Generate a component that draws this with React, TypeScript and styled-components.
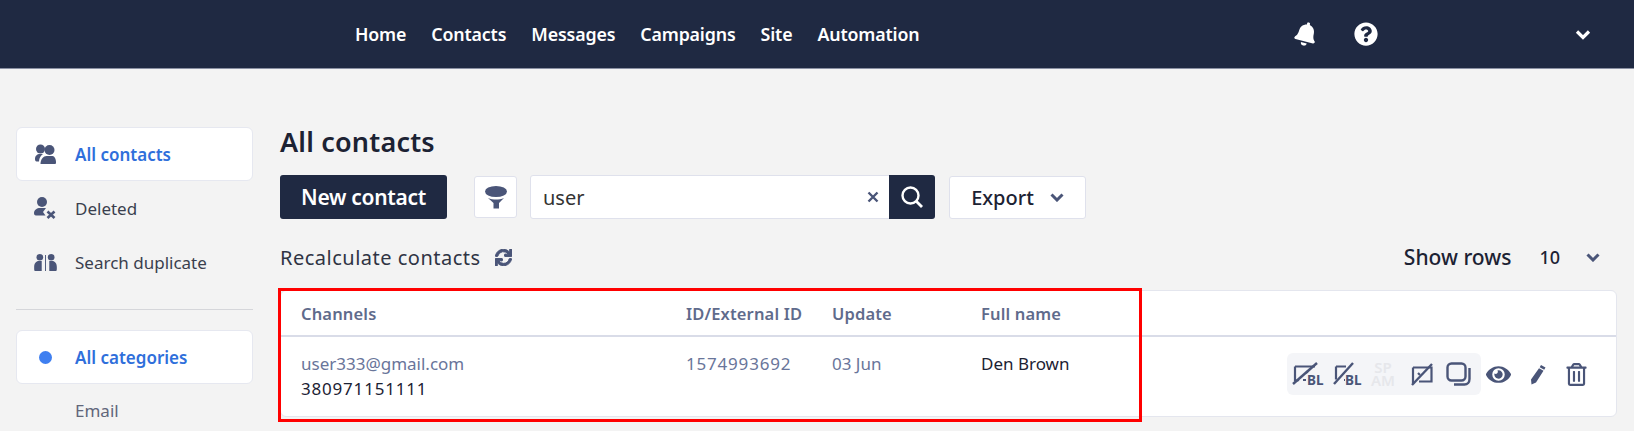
import React from "react";
import styled, { createGlobalStyle } from "styled-components";
import { FaBell, FaQuestionCircle, FaSync, FaEye, FaRegTrashAlt } from "react-icons/fa";

const Global = createGlobalStyle`
  html, body { margin: 0; padding: 0; background: #f3f3f3; }
  body { font-family: "Noto Sans", "Liberation Sans", sans-serif; color: #1f2942; overflow: hidden; }
  * { box-sizing: border-box; }
`;
const I = "#4a5578";
const Page = styled.div`width: 1634px; height: 431px; overflow: hidden; position: relative;`;
const Header = styled.header`
  height: 69px; background: #1f2942; display: flex; align-items: center;
  border-bottom: 1px solid #8a90a3; padding: 0 0 0 355px; color: #fff;
`;
const Nav = styled.nav`display: flex; gap: 25px; width: 940px; flex: none;`;
const NavLink = styled.a`font-size: 17.8px; font-weight: 600; color: #fff; line-height: 22px; letter-spacing: -0.15px;`;
const HeaderIcons = styled.div`display: flex; align-items: center; flex: none; color: #fff;`;
const Bell = styled(FaBell)`width: 22px; height: 24px; flex: none; transform: rotate(14deg);`;
const Help = styled(FaQuestionCircle)`width: 24px; height: 24px; flex: none; margin-left: 37px;`;
const Chevron = styled.svg<{ $left?: number }>`display: block; flex: none; margin-left: ${p => p.$left ?? 0}px;`;
const Body = styled.div`display: flex; padding: 58px 18px 0 16px; gap: 26px;`;
const Side = styled.aside`width: 237px; flex: none;`;
const SideItem = styled.div<{ $active?: boolean }>`
  height: 54px; display: flex; align-items: center; padding-left: 16px; gap: 18px; font-size: 17px;
  border-radius: 6px; color: ${p => (p.$active ? "#2f6fdb" : "#3a3f4e")}; font-weight: ${p => (p.$active ? 600 : 400)};
  background: ${p => (p.$active ? "#fff" : "transparent")};
  border: 1px solid ${p => (p.$active ? "#e6e8f0" : "transparent")};
`;
const IconSlot = styled.span`width: 24px; display: flex; justify-content: center; flex: none;`;
const Dot = styled.span`width: 13px; height: 13px; border-radius: 50%; background: #3f7ff0;`;
const Divider = styled.hr`margin: 20px 0 20px; border: 0; border-top: 1px solid #d5d6da;`;
const Sub = styled.div`padding: 15px 0 0 59px; font-size: 17px; line-height: 23px; color: #61667a;`;
const Main = styled.main`flex: 1; min-width: 0; padding-left: 1px;`;
const Title = styled.h1`margin: 0; font-size: 27px; line-height: 30px; font-weight: 600; color: #1c2233; letter-spacing: 0.2px;`;
const Toolbar = styled.div`display: flex; align-items: center; margin-top: 18px; height: 44px;`;
const Primary = styled.button`
  width: 167px; height: 44px; background: #1f2942; color: #fff; border: 0; border-radius: 3px;
  font: 600 21px "Noto Sans", sans-serif; letter-spacing: -0.3px; padding: 0;
`;
const Square = styled.div`
  margin-left: 27px; width: 43px; height: 42px; background: #fff; border: 1px solid #dfe1ec; border-radius: 3px;
  display: flex; align-items: center; justify-content: center;
`;
const Search = styled.div`
  margin-left: 13px; width: 405px; height: 44px; background: #fff; border: 1px solid #dfe1ec; border-radius: 3px;
  display: flex; align-items: center; padding-left: 12px; font-size: 20px; color: #333;
`;
const SearchText = styled.span`flex: 1;`;
const Clear = styled.svg`margin-right: 10px;`;
const SearchBtn = styled.div`
  width: 46px; height: 44px; margin: -1px -1px -1px 0; background: #1f2942; border-radius: 0 3px 3px 0;
  display: flex; align-items: center; justify-content: center;
`;
const Export = styled.div`
  margin-left: 14px; width: 137px; height: 43px; background: #fff; border: 1px solid #dfe1ec; border-radius: 3px;
  display: flex; align-items: center; justify-content: center; gap: 16px; font-size: 20px; color: #1c2233; font-weight: 500;
`;
const Recalc = styled.div`display: flex; align-items: center; height: 36px; margin-top: 20px; font-size: 20px; color: #2f3444; letter-spacing: 0.5px;`;
const Refresh = styled(FaSync)`margin-left: 14px; width: 17px; height: 17px; color: ${I}; stroke: ${I}; stroke-width: 30px;`;
const Show = styled.div`margin-left: auto; margin-right: 16px; display: flex; align-items: center; font-size: 21px; font-weight: 500; color: #1c2233; letter-spacing: 0;`;
const ShowVal = styled.span`margin-left: 28px; margin-right: 26px; font-size: 18px;`;
const Table = styled.div`
  margin-top: 15px; width: 1337px; height: 127px; background: #fff; border: 1px solid #e4e6ee; border-radius: 6px;
`;
const Row = styled.div`display: grid; grid-template-columns: 385px 146px 149px 1fr; padding-left: 20px;`;
const Head = styled(Row)`
  height: 46px; align-items: center; border-bottom: 2px solid #d9dce8; font-size: 16.5px; font-weight: 600; color: #5f6b8c; letter-spacing: 0.15px;
`;
const BodyRow = styled(Row)`padding-top: 14px; font-size: 17px; line-height: 25px; position: relative;`;
const Muted = styled.div`color: #69759a;`;
const Dark = styled.div`color: #1c2233;`;
const Digits = styled.div<{ $dark?: boolean }>`letter-spacing: 0.8px; color: ${p => (p.$dark ? "#1c2233" : "#69759a")};`;
const Actions = styled.div`position: absolute; right: 29px; top: 16px; display: flex; align-items: center;`;
const Flags = styled.div`
  width: 194px; height: 42px; background: #f4f5f8; border-radius: 6px; margin-right: 5px;
  display: flex; align-items: center; padding-left: 5px;
`;
const Glyph = styled.svg<{ $left?: number }>`display: block; flex: none; margin-left: ${p => p.$left ?? 0}px;`;
const Spam = styled.span`
  width: 24px; margin: 0 16px 0 8px; font-size: 15px; line-height: 13px; color: #e6e7eb; font-weight: 600; text-align: center;
`;
const BL = styled.text`font: 700 13.5px "Noto Sans", sans-serif; fill: ${I};`;
const Eye = styled(FaEye)`width: 25px; height: 25px; flex: none; color: ${I};`;
const Pencil = styled.svg`width: 16px; height: 21px; flex: none; margin-left: 19px;`;
const Trash = styled(FaRegTrashAlt)`width: 21px; height: 23px; flex: none; margin-left: 20px; color: ${I};`;
const RedBox = styled.div`
  position: absolute; left: 278px; top: 288px; width: 864px; height: 134px; border: 3px solid #f00; pointer-events: none;
`;

export default function App() {
  return (
    <Page>
      <Global />
      <Header>
        <Nav>
          {["Home", "Contacts", "Messages", "Campaigns", "Site", "Automation"].map(n => <NavLink key={n}>{n}</NavLink>)}
        </Nav>
        <HeaderIcons>
          <Bell />
          <Help />
          <Chevron $left={197} width="16" height="11" viewBox="0 0 16 11"><path d="M2 2.500l6 6 6-6" fill="none" stroke="#fff" strokeWidth="3.200"/></Chevron>
        </HeaderIcons>
      </Header>
      <Body>
        <Side>
          <SideItem $active>
            <IconSlot>
              <svg width="21" height="20" viewBox="0 0 21 20" fill={I}>
                <circle cx="5.500" cy="5" r="4.500"/><circle cx="14.500" cy="6" r="5"/>
                <path d="M5.500 20c0-5 3-8 6-8h6c2 0 3.500 3 3.500 6.500 0 1-.5 1.500-1.500 1.500z"/>
                <path d="M0 15c0-3 2-5 5-5h3c-2 1.500-4 4-4 7.500H1.500C.5 17.500 0 16.500 0 15z"/>
              </svg>
            </IconSlot>
            All contacts
          </SideItem>
          <SideItem>
            <IconSlot>
              <svg width="22" height="22" viewBox="0 0 22 22" fill={I}><circle cx="8" cy="5" r="5"/><path d="M0 16c0-3 3-5 6-5h6l-3 4 2.500 3.500H2c-1.500 0-2-1-2-2.500z"/><path d="M13.500 14.500l7 6.500M20.500 14.500l-7 6.500" stroke={I} strokeWidth="2.600"/></svg>
            </IconSlot>
            Deleted
          </SideItem>
          <SideItem>
            <IconSlot>
              <svg width="23" height="17" viewBox="0 0 24 18" fill={I}><circle cx="6" cy="3.500" r="3.500"/><circle cx="18" cy="3.500" r="3.500"/><path d="M0 14c0-4 2-6.500 5-6.500h3V18H1c-1 0-1-1-1-4zM16 7.500h3c3 0 5 2.500 5 6.500 0 3 0 4-1 4h-7z"/><path d="M11.500 1h1v17h-1z"/></svg>
            </IconSlot>
            Search duplicate
          </SideItem>
          <Divider />
          <SideItem $active>
            <IconSlot><Dot /></IconSlot>
            All categories
          </SideItem>
          <Sub>Email</Sub>
        </Side>
        <Main>
          <Title>All contacts</Title>
          <Toolbar>
            <Primary>New contact</Primary>
            <Square>
              <svg width="22" height="23" viewBox="0 0 22 23" fill={I}><ellipse cx="11" cy="5.500" rx="11" ry="5.500"/><path d="M3 12c2.500 1 5.500 1.500 8 1.500s5.500-.5 8-1.500l-5 5v5.500H8.500V17z"/></svg>
            </Square>
            <Search>
              <SearchText>user</SearchText>
              <Clear width="12" height="12" viewBox="0 0 12 12"><path d="M1.500 1.500l9 9M10.500 1.500l-9 9" stroke={I} strokeWidth="2.400"/></Clear>
              <SearchBtn>
                <svg width="24" height="24" viewBox="0 0 24 24" fill="none" stroke="#fff"><circle cx="10.500" cy="10.500" r="8" strokeWidth="2.400"/><path d="M16 16l6 6" strokeWidth="2.800"/></svg>
              </SearchBtn>
            </Search>
            <Export>
              Export
              <Chevron width="14" height="9" viewBox="0 0 14 9"><path d="M1.500 1.500L7 7l5.500-5.500" fill="none" stroke={I} strokeWidth="3"/></Chevron>
            </Export>
          </Toolbar>
          <Recalc>
            Recalculate contacts
            <Refresh />
            <Show>
              Show rows
              <ShowVal>10</ShowVal>
              <Chevron width="14" height="9" viewBox="0 0 14 9"><path d="M1.500 1.500L7 7l5.500-5.500" fill="none" stroke={I} strokeWidth="3"/></Chevron>
            </Show>
          </Recalc>
          <Table>
            <Head>
              <div>Channels</div><div>ID/External ID</div><div>Update</div><div>Full name</div>
            </Head>
            <BodyRow>
              <div><Muted>user333@gmail.com</Muted><Digits $dark>380971151111</Digits></div>
              <Digits>1574993692</Digits>
              <Muted>03 Jun</Muted>
              <Dark>Den Brown</Dark>
              <Actions>
                <Flags>
                  <Glyph width="34" height="30" viewBox="0 -3 34 30" fill="none" stroke={I}>
                    <path d="M3 4.500h20M3 4.500v15M3 19l4-1M11 18h3M14 11l2-2" strokeWidth="2.200"/>
                    <path d="M1 22 25 1" strokeWidth="2.400"/>
                    <BL x="15" y="23" stroke="none">BL</BL>
                  </Glyph>
                  <Glyph $left={7} width="30" height="30" viewBox="0 -3 30 30" fill="none" stroke={I}>
                    <path d="M3 4.500h10M3 4.500v13M11 18h1" strokeWidth="2.200"/>
                    <path d="M1 22 20 1" strokeWidth="2.400"/>
                    <BL x="12" y="23" stroke="none">BL</BL>
                  </Glyph>
                  <Spam>SP<br />AM</Spam>
                  <Glyph width="23" height="23" viewBox="0 0 23 23" fill="none" stroke={I}>
                    <path d="M2 4.500h18.500v14H8M2 4.500v16M7 10l2 2" strokeWidth="2.200"/>
                    <path d="M1 22 21 1" strokeWidth="2.400"/>
                  </Glyph>
                  <Glyph $left={12} width="25" height="24" viewBox="0 0 25 24" fill="none" stroke={I}>
                    <rect x="1.500" y="1.500" width="18" height="17" rx="4" strokeWidth="2.400"/>
                    <path d="M23.500 6v11c0 3-2 5.500-5 5.500H8" strokeWidth="2.400"/>
                  </Glyph>
                </Flags>
                <Eye />
                <Pencil viewBox="0 0 16 21"><path d="M11 1l4.500 2.500-1.300 2.300-4.500-2.500zM9 4.300l4.500 2.500L6 18.500l-4.500 2-.5-5z" fill={I}/></Pencil>
                <Trash />
              </Actions>
            </BodyRow>
          </Table>
        </Main>
      </Body>
      <RedBox />
    </Page>
  );
}
